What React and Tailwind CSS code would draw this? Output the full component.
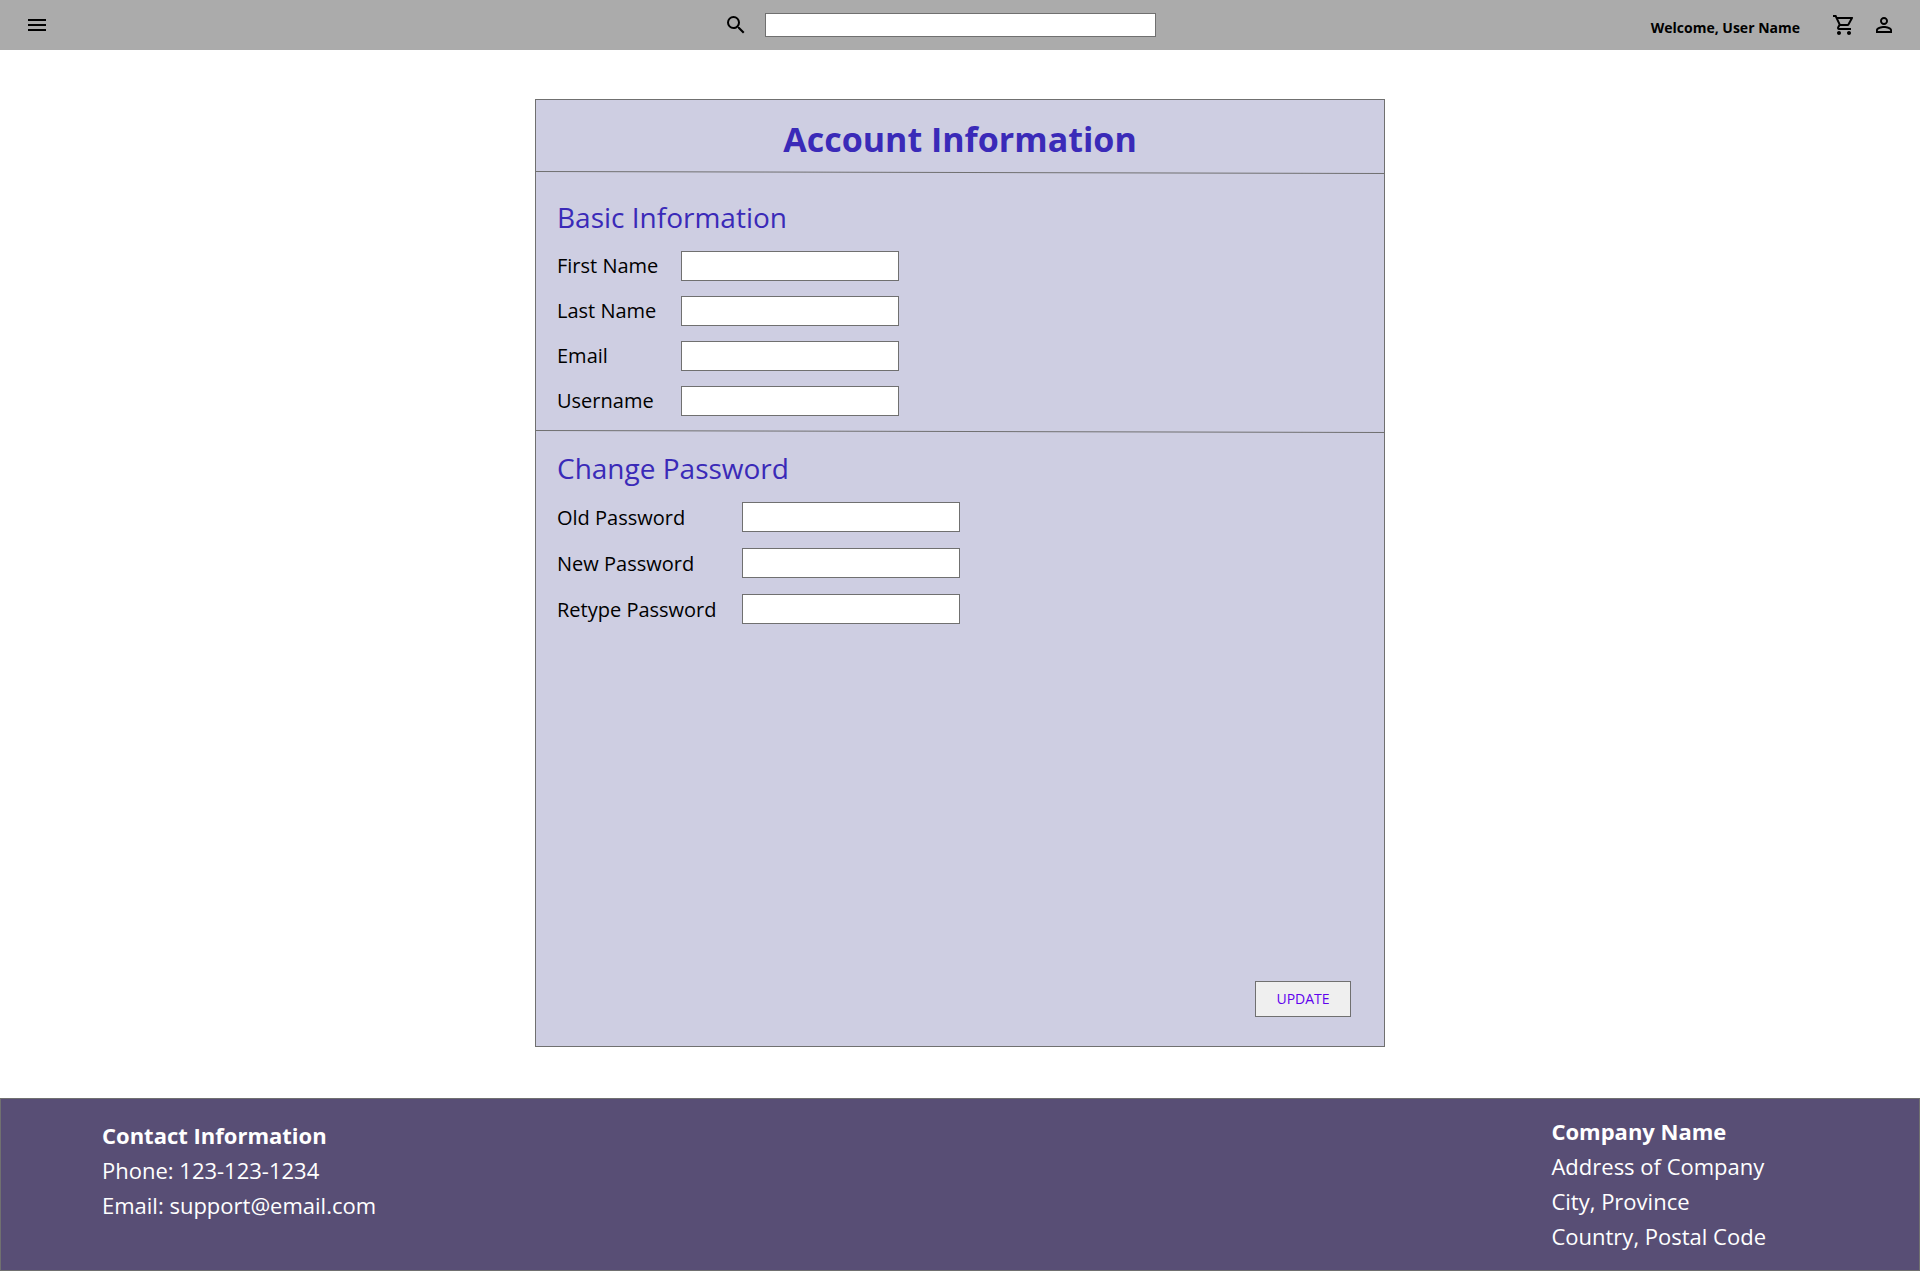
import React from "react";
import { MdMenu, MdSearch, MdOutlineShoppingCart, MdPersonOutline } from "react-icons/md";

const basicFields = [
  { id: "first-name", label: "First Name", type: "text" },
  { id: "last-name", label: "Last Name", type: "text" },
  { id: "email", label: "Email", type: "email" },
  { id: "username", label: "Username", type: "text" },
];

const passwordFields = [
  { id: "old-password", label: "Old Password", type: "password" },
  { id: "new-password", label: "New Password", type: "password" },
  { id: "retype-password", label: "Retype Password", type: "password" },
];

function IconButton({ label, icon: Icon }) {
  return (
    <button type="button" aria-label={label} className="block text-black">
      <Icon className="size-6" />
    </button>
  );
}

function Header() {
  return (
    <header className="flex h-[50px] items-center bg-[#ababab] pr-6 pl-[25px]">
      <div className="flex-1">
        <IconButton label="Menu" icon={MdMenu} />
      </div>
      <form role="search" className="flex items-center gap-[17px] pr-[42px]">
        <IconButton label="Search" icon={MdSearch} />
        <input
          type="search"
          aria-label="Search"
          className="h-6 w-[391px] border border-[#707070] bg-white px-2 text-sm outline-none"
        />
      </form>
      <div className="flex flex-1 items-center justify-end">
        <p className="mr-8 pt-1.5 text-sm font-bold">Welcome, User Name</p>
        <div className="flex gap-4">
          <IconButton label="Cart" icon={MdOutlineShoppingCart} />
          <IconButton label="Account" icon={MdPersonOutline} />
        </div>
      </div>
    </header>
  );
}

/* Thin rule that drops slightly from left to right. */
function SlantedRule() {
  return (
    <svg
      className="block h-[3px] w-full shrink-0 overflow-visible"
      viewBox="0 0 848 3"
      preserveAspectRatio="none"
      aria-hidden="true"
    >
      <line x1="0" y1="0.5" x2="849" y2="2.5" stroke="#707070" strokeWidth="1" />
    </svg>
  );
}

function Field({ id, label, type, labelClass }) {
  return (
    <div className="flex items-start">
      <label htmlFor={id} className={"shrink-0 text-xl " + labelClass}>
        {label}
      </label>
      <input
        id={id}
        type={type}
        className="h-[30px] w-[218px] border border-[#707070] bg-white px-2 text-base outline-none"
      />
    </div>
  );
}

export default function App() {
  return (
    <div className="bg-white font-['Open_Sans',sans-serif] text-black">
      <Header />
      <main className="px-4 pt-[49px] pb-[51px]">
        <form className="mx-auto flex min-h-[948px] w-full max-w-[850px] flex-col border border-[#707070] bg-[#cecee2]">
          <h1 className="pt-2 text-center text-[34px] leading-[63px] font-bold text-[#3a2ab8]">
            Account Information
          </h1>
          <SlantedRule />
          <section className="px-[21px] pt-6 pb-[14px]">
            <h2 className="text-[28px] leading-[38px] text-[#3a2ab8]">Basic Information</h2>
            <div className="mt-[15px] flex flex-col gap-[15px]">
              {basicFields.map((f) => (
                <Field key={f.id} {...f} labelClass="w-[124px] leading-[30px]" />
              ))}
            </div>
          </section>
          <SlantedRule />
          <section className="px-[21px] pt-4">
            <h2 className="text-[28px] leading-[38px] text-[#3a2ab8]">Change Password</h2>
            <div className="mt-[15px] flex flex-col gap-[14px]">
              {passwordFields.map((f) => (
                <Field key={f.id} {...f} labelClass="w-[185px] leading-[32px]" />
              ))}
            </div>
          </section>
          <button
            type="submit"
            className="mt-auto mr-[33px] mb-[29px] h-9 w-24 self-end border border-[#707070] bg-[#efefef] text-sm text-[#6002ee]"
          >
            UPDATE
          </button>
        </form>
      </main>
      <footer className="flex justify-between border border-[#707070] bg-[#584e75] pt-[15px] pr-[153px] pb-4 pl-[101px] text-[22px] leading-[35px] text-white">
        <address className="pt-1 not-italic">
          <h2 className="font-bold">Contact Information</h2>
          <p>Phone: 123-123-1234</p>
          <p>Email: support@email.com</p>
        </address>
        <address className="not-italic">
          <h2 className="font-bold">Company Name</h2>
          <p>Address of Company</p>
          <p>City, Province</p>
          <p>Country, Postal Code</p>
        </address>
      </footer>
    </div>
  );
}
